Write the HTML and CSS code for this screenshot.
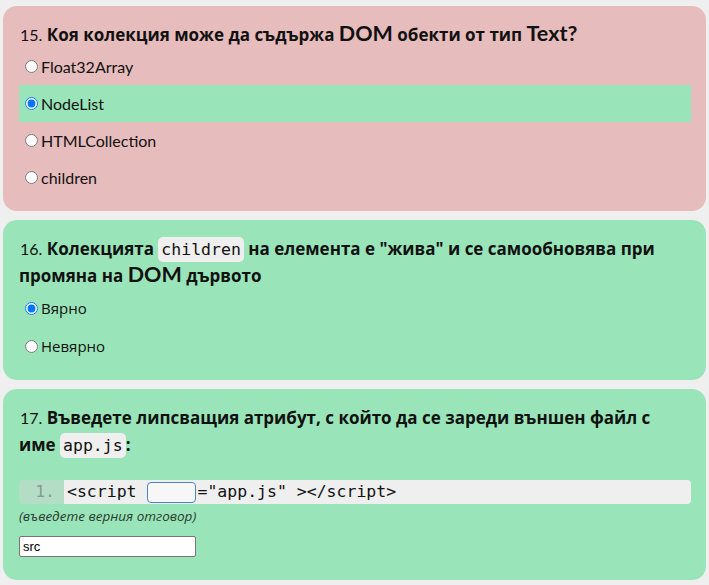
FILE: index.html
```html
<!DOCTYPE html>
<html lang="bg">
<head>
<meta charset="utf-8">
<title>Въпроси</title>
<link rel="stylesheet" href="styles.css">
</head>
<body>
<div class="quiz">
  <section class="card wrong">
    <div class="title"><span class="num">15.</span> <span class="q">Коя колекция може да съдържа <span class="lat">DOM</span> обекти от тип <span class="lat">Text?</span></span></div>
    <label class="opt"><input type="radio" name="q15"><span class="lat-opt">Float32Array</span></label>
    <label class="opt chosen"><input type="radio" name="q15" checked><span class="lat-opt">NodeList</span></label>
    <label class="opt"><input type="radio" name="q15"><span class="lat-opt">HTMLCollection</span></label>
    <label class="opt"><input type="radio" name="q15"><span class="lat-opt">children</span></label>
  </section>

  <section class="card right">
    <div class="title"><span class="num">16.</span> <span class="q">Колекцията <code class="chip">children</code> на елемента е "жива" и се самообновява при промяна на <span class="lat">DOM</span> дървото</span></div>
    <label class="opt tall"><input type="radio" name="q16" checked><span class="cyr-opt">Вярно</span></label>
    <label class="opt tall"><input type="radio" name="q16"><span class="cyr-opt">Невярно</span></label>
  </section>

  <section class="card right last">
    <div class="title"><span class="num">17.</span> <span class="q">Въведете липсващия атрибут, с който да се зареди външен файл с име <code class="chip">app.js</code>:</span></div>
    <div class="code">
      <div class="gutter">1.</div>
      <div class="line">&lt;script <input class="blank" type="text">="app.js" &gt;&lt;/script&gt;</div>
    </div>
    <div class="hint">(въведете верния отговор)</div>
    <input class="answer" type="text" value="src">
  </section>
</div>
</body>
</html>
```

FILE: styles.css
```css
html, body {
  margin: 0;
  padding: 0;
  background: #efefef;
}

.quiz {
  display: flex;
  flex-direction: column;
  gap: 9px;
  padding: 6px 3px 5px;
}

.card {
  border-radius: 14px;
  padding: 15px 15px 15px 16px;
  color: #111;
}

.card.wrong { background: #e7bcbc; }
.card.right { background: #99e5b9; }

.title {
  font-family: "Open Sans", sans-serif;
  font-size: 17px;
  line-height: 27px;
}

.num {
  font-family: Lato, sans-serif;
  font-size: 16px;
  font-weight: 400;
  margin-left: 1px;
}

.q {
  font-weight: 700;
}

.lat {
  font-family: Lato, sans-serif;
  font-size: 21.5px;
  font-weight: 700;
  line-height: 1;
}

.chip {
  font-family: "DejaVu Sans Mono", monospace;
  font-size: 16.5px;
  font-weight: 400;
  line-height: 1;
  background: #efefef;
  border-radius: 5px;
  padding: 3px 3px;
}

.opt {
  display: flex;
  align-items: center;
  height: 37px;
}

.opt.tall { height: 38px; }

.opt.chosen { background: #99e5b9; }

.opt input {
  width: 13px;
  height: 13px;
  margin: 0 3px 0 6px;
}

.lat-opt {
  font-family: Lato, sans-serif;
  font-size: 16px;
}

.cyr-opt {
  font-family: "Open Sans", sans-serif;
  font-size: 15px;
}

.card .code {
  display: flex;
  margin-top: 22px;
  height: 24px;
  font-family: "DejaVu Sans Mono", monospace;
  font-size: 16.5px;
  line-height: 24px;
}

.gutter {
  width: 36px;
  padding-right: 9px;
  text-align: right;
  color: #8a9a90;
  background: rgba(200, 215, 205, 0.55);
  border-radius: 4px 0 0 4px;
}

.line {
  flex: 1;
  display: flex;
  align-items: center;
  padding-left: 3px;
  background: #efefef;
  border-radius: 0 4px 4px 0;
  color: #111;
  white-space: pre;
}

.blank {
  width: 49px;
  height: 21px;
  box-sizing: border-box;
  margin: 0 1px;
  padding: 0;
  border: 1px solid #4a86c8;
  border-radius: 4px;
  background: #f7f7f7;
}

.hint {
  font-family: "Open Sans", sans-serif;
  font-style: italic;
  font-size: 13.5px;
  line-height: 18px;
  color: #2c3a31;
  margin-top: 3px;
}

.answer {
  display: block;
  box-sizing: border-box;
  width: 177px;
  height: 21px;
  margin-top: 11px;
  margin-bottom: 8px;
  padding: 1px 3px;
  font-family: "Liberation Sans", Arial, sans-serif;
  font-size: 13px;
  border: 1px solid #767676;
  border-radius: 2px;
  background: #fff;
  color: #000;
}
```
